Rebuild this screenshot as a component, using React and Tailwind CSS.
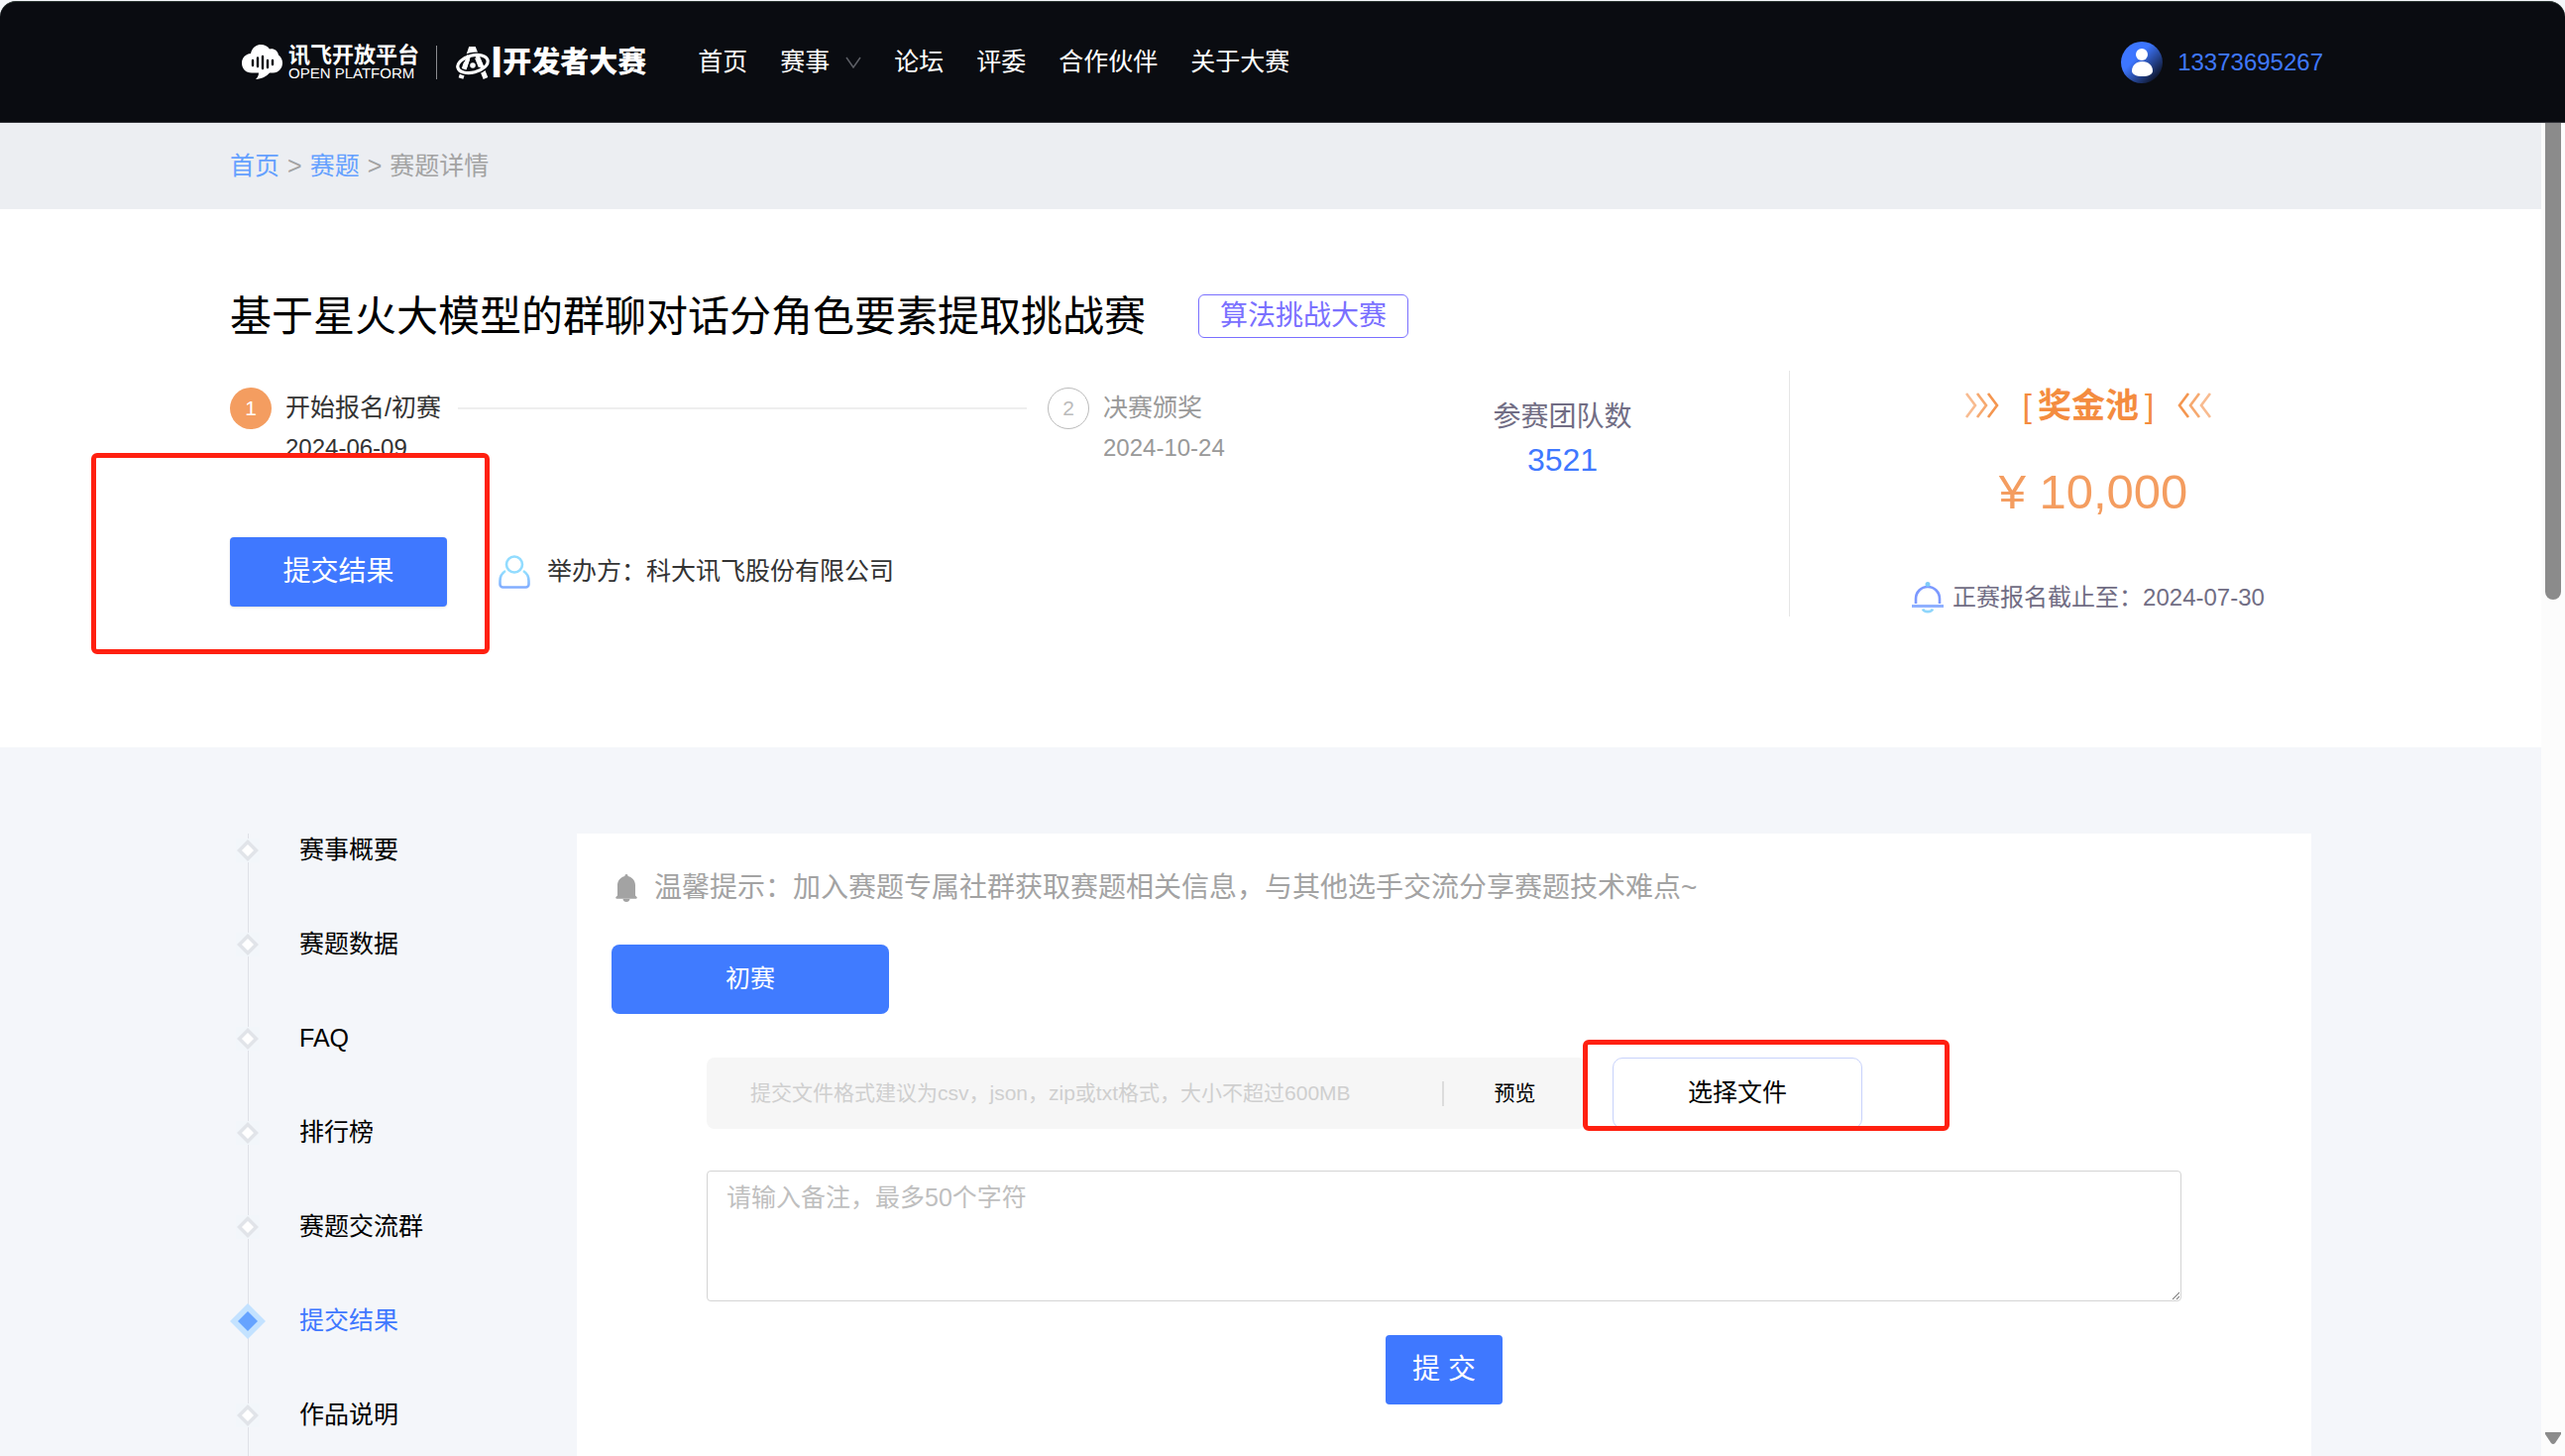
import { useRef, useState } from "react";

const navItems = [
  { label: "首页" },
  { label: "赛事", hasMenu: true },
  { label: "论坛" },
  { label: "评委" },
  { label: "合作伙伴" },
  { label: "关于大赛" },
];

const sections = ["赛事概要", "赛题数据", "FAQ", "排行榜", "赛题交流群", "提交结果", "作品说明"];

// Icons
const CloudLogo = () => (
  <svg className="w-[41px] h-[36px] shrink-0" viewBox="0 0 41 36" aria-hidden="true">
    <path
      fill="#fff"
      d="M9 9C10 4 14 0 19 0c4 0 7 1.500 9 4.500 4-1 8 1 9 6 2.500 2 4 4.500 4 8 0 5.500-4 10-9.500 10H28c-3 3.500-8 6-14 6.500 2-2 3-4 3-6.500h-7C4 28.500 0 24.500 0 18.500 0 13.500 3.500 9.500 9 9z"
    />
    <g stroke="#0a0c11" strokeWidth="2.400" strokeLinecap="round">
      <path d="M11 16v5M16 13.500v8.500M21 12v12M26 16v7M31 16v4" />
    </g>
  </svg>
);

const OrbitLogo = () => (
  <svg className="w-[36px] h-[34px] shrink-0" viewBox="0 0 36 34" aria-hidden="true">
    <g fill="none">
      <path stroke="#fff" strokeWidth="5" d="M6 33L16 3.500h3L31 33" />
      <ellipse cx="18" cy="18.500" rx="15.500" ry="8.500" stroke="#0a0c11" strokeWidth="6" transform="rotate(-14 18 18.500)" />
      <ellipse cx="18" cy="18.500" rx="15.500" ry="8.500" stroke="#fff" strokeWidth="3.200" transform="rotate(-14 18 18.500)" />
      <path stroke="#fff" strokeWidth="4" d="M10 22l4-12M22 9l6 14" />
    </g>
    <circle cx="18" cy="20" r="2.800" fill="#fff" />
  </svg>
);

const ChevronIcon = () => (
  <svg className="w-[16px] h-[12px]" viewBox="0 0 16 12" fill="none" stroke="#5d5f66" strokeWidth="1.500" aria-hidden="true">
    <path d="M1 1l7 10 7-10" />
  </svg>
);

const AvatarIcon = () => (
  <svg className="w-[42px] h-[42px]" viewBox="0 0 42 42" aria-hidden="true">
    <defs>
      <linearGradient id="avatar" x1="0.2" y1="0.2" x2="0.9" y2="0.9">
        <stop offset="0.25" stopColor="#3d76ff" />
        <stop offset="1" stopColor="#0b1020" />
      </linearGradient>
    </defs>
    <circle cx="21" cy="21" r="21" fill="url(#avatar)" />
    <circle cx="21" cy="13" r="6" fill="#fff" />
    <path fill="#fff" d="M11 29.500C11 24 15.500 20 21.500 20S32 24 32 29.500c0 3.500-4 5.500-10.500 5.500S11 33 11 29.500z" />
  </svg>
);

const OrganizerIcon = () => (
  <svg className="w-[32px] h-[34px]" viewBox="0 0 32 34" fill="none" strokeWidth="2.600" aria-hidden="true">
    <defs>
      <linearGradient id="person" x1="0" y1="0" x2="0" y2="1">
        <stop offset="0" stopColor="#92e0ff" />
        <stop offset="1" stopColor="#82adff" />
      </linearGradient>
    </defs>
    <circle cx="16" cy="9.500" r="8" stroke="#92dcff" />
    <path stroke="url(#person)" d="M7 16c-4 2.500-5.500 6-5.500 10v3.500a3 3 0 003 3h23a3 3 0 003-3V26c0-4-1.500-7.500-5.500-10" />
  </svg>
);

const DeadlineIcon = () => (
  <svg className="w-[32px] h-[32px]" viewBox="0 0 32 32" fill="none" strokeWidth="2.600" aria-hidden="true">
    <path stroke="#7c99ff" d="M4 22v-5a12 12 0 0124 0v5" />
    <path stroke="#8fb0ff" strokeWidth="3" d="M0 24.500h32" />
    <path stroke="#8fd6fb" d="M11 27.500c1.500 3.500 8.500 3.500 10 0" />
    <circle cx="16" cy="2.500" r="2.500" fill="#7fcbf8" />
  </svg>
);

const BellIcon = () => (
  <svg className="w-[22px] h-[28px]" viewBox="0 0 22 28" fill="#a3a3a3" aria-hidden="true">
    <path d="M11 0c1.100 0 1.600.8 1.600 2 4.400 1 7.400 4.600 7.400 9v10.500l1.500 1.500a1 1 0 01-.7 1.700H1.200A1 1 0 01.5 23L2 21.500V11c0-4.400 3-8 7.400-9 0-1.200.5-2 1.600-2z" />
    <path d="M7.500 25h7c-.3 1.800-1.600 3-3.500 3s-3.200-1.200-3.500-3z" />
  </svg>
);

const PrizeArrows = ({ flipped }) => (
  <svg
    className={`w-[34px] h-[26px] ${flipped ? "-scale-x-100" : ""}`}
    viewBox="0 0 34 26"
    fill="none"
    strokeWidth="2.600"
    aria-hidden="true"
  >
    <path stroke="#f8bb90" d="M1 1l9 12-9 12" />
    <path stroke="#f6a970" d="M12 1l9 12-9 12" />
    <path stroke="#f49650" d="M23 1l9 12-9 12" />
  </svg>
);

const DiamondIcon = ({ active }) =>
  active ? (
    <svg className="w-[36px] h-[36px]" viewBox="0 0 36 36" aria-hidden="true">
      <path fill="#c3e2ff" d="M18 0l18 18-18 18L0 18z" />
      <path fill="#66a3ff" d="M18 8l10 10-10 10L8 18z" />
    </svg>
  ) : (
    <svg className="w-[24px] h-[24px]" viewBox="0 0 24 24" aria-hidden="true">
      <path fill="#f2f6fa" d="M0 0h24v24H0z" />
      <path fill="#fff" stroke="#e1e4e9" strokeWidth="3.500" d="M12 3.500l8.500 8.500-8.500 8.500L3.500 12z" />
    </svg>
  );

function Header() {
  return (
    <header className="shrink-0 h-[123px] bg-[#0a0c11] border-t border-b border-t-[#2a3530] border-b-[#33343a] rounded-t-2xl">
      <div className="max-w-[2100px] h-full mx-auto flex items-center">
        <a href="#" className="flex items-center text-white">
          <CloudLogo />
          <span className="ml-1.5 flex flex-col">
            <span className="text-[22px] leading-[22px] font-bold">讯飞开放平台</span>
            <span className="text-[15px] leading-[14px]">OPEN PLATFORM</span>
          </span>
        </a>
        <span className="w-px h-[34px] ml-[17px] bg-[#8b8c90]" />
        <a href="#" className="ml-[18px] flex items-center text-white">
          <OrbitLogo />
          <span className="text-[44px] leading-[34px] font-bold">I</span>
          <span className="text-[29px] leading-[34px] font-black">开发者大赛</span>
        </a>
        <nav className="ml-[52px] flex items-center gap-[33px] text-[25px] text-white">
          {navItems.map((item) => (
            <a key={item.label} href="#" className="flex items-center gap-4">
              {item.label}
              {item.hasMenu && <ChevronIcon />}
            </a>
          ))}
        </nav>
        <a href="#" className="ml-auto flex items-center gap-[15px] text-2xl text-[#3f78ff]">
          <AvatarIcon />
          13373695267
        </a>
      </div>
    </header>
  );
}

function Hero() {
  return (
    <section className="shrink-0 bg-white h-[543px]">
      <div className="max-w-[2100px] mx-auto pt-[86px]">
        <div className="flex items-center h-[44px] gap-[53px]">
          <h1 className="text-[42px] text-black">基于星火大模型的群聊对话分角色要素提取挑战赛</h1>
          <span className="h-[44px] px-[21px] flex items-center border border-[#7a70ff] rounded-md text-[28px] text-[#7a70ff]">
            算法挑战大赛
          </span>
        </div>

        <div className="mt-[33px] flex h-[248px]">
          <div className="w-[1116px] pt-[17px]">
            <ol className="flex text-[25px]">
              <li className="flex-1 flex">
                <span className="w-[42px] h-[42px] rounded-full bg-[#f49d60] text-white text-[21px] flex items-center justify-center">
                  1
                </span>
                <span className="flex-1 ml-[14px] text-[#333]">
                  <span className="flex items-center h-[42px] gap-[17px]">
                    开始报名/初赛
                    <span className="flex-1 h-[2px] mr-[21px] bg-[#eee]" />
                  </span>
                  <span className="block text-2xl leading-[38px]">2024-06-09</span>
                </span>
              </li>
              <li className="w-[291px] flex">
                <span className="w-[42px] h-[42px] rounded-full border border-[#bbb] text-[#bbb] text-[21px] flex items-center justify-center">
                  2
                </span>
                <span className="ml-[14px] text-[#999]">
                  <span className="flex items-center h-[42px]">决赛颁奖</span>
                  <span className="block text-2xl leading-[38px]">2024-10-24</span>
                </span>
              </li>
            </ol>

            <div className="mt-[71px] flex items-center">
              <div className="relative">
                <button
                  type="button"
                  className="block w-[219px] h-[70px] rounded bg-[#3f78ff] text-white text-[28px] shadow-sm"
                >
                  提交结果
                </button>
                <span className="absolute -left-[140px] -top-[85px] w-[402px] h-[203px] border-[5px] border-[#ff2010] rounded-md pointer-events-none" />
              </div>
              <span className="ml-[52px]">
                <OrganizerIcon />
              </span>
              <span className="ml-[17px] text-[25px] text-[#333]">举办方：科大讯飞股份有限公司</span>
            </div>
          </div>

          <div className="flex-1 flex flex-col items-center pt-[26px]">
            <span className="text-[28px] leading-[42px] text-[#716d84]">参赛团队数</span>
            <span className="text-[32px] leading-[44px] text-[#3f78ff]">3521</span>
          </div>

          <div className="w-[527px] pl-[76px] border-l border-[#e6e6e6] flex flex-col items-center">
            <div className="mt-[14px] h-[42px] flex items-center gap-6 text-[#f48c3f]">
              <PrizeArrows />
              <span className="flex items-center gap-1.5 text-[34px] leading-[42px]">
                <span>[</span>
                <span className="font-bold">奖金池</span>
                <span>]</span>
              </span>
              <PrizeArrows flipped />
            </div>
            <div className="mt-[38px] ml-[10px] text-[49px] leading-[56px] text-[#f49d60]">¥ 10,000</div>
            <div className="mt-[60px] flex items-center gap-[9px] text-2xl leading-[38px] text-[#716d84]">
              <DeadlineIcon />
              <span>正赛报名截止至：2024-07-30</span>
            </div>
          </div>
        </div>
      </div>
    </section>
  );
}

function SectionNav({ current, onChange }) {
  return (
    <nav className="relative w-[350px] shrink-0 pt-[56px]">
      <span className="absolute left-[18px] top-[87px] bottom-0 w-px bg-[#dfe1e7]" />
      <ul className="relative">
        {sections.map((name) => (
          <li key={name}>
            <button type="button" onClick={() => onChange(name)} className="flex items-center h-[95px] text-[25px]">
              <span className="w-[36px] flex justify-center">
                <DiamondIcon active={name === current} />
              </span>
              <span className={name === current ? "ml-[34px] text-[#3f78ff]" : "ml-[34px] text-black"}>{name}</span>
            </button>
          </li>
        ))}
      </ul>
    </nav>
  );
}

function SubmitPanel() {
  const [fileName, setFileName] = useState("");
  const [remark, setRemark] = useState("");
  const fileInput = useRef(null);

  const handleSubmit = (e) => {
    e.preventDefault();
  };

  return (
    <div className="flex-1 mt-[87px] bg-white px-[35px] pt-[34px]">
      <div className="flex items-center h-[42px] pl-1 gap-[17px] text-[28px] text-[#a3a3a3]">
        <BellIcon />
        <span>温馨提示：加入赛题专属社群获取赛题相关信息，与其他选手交流分享赛题技术难点~</span>
      </div>
      <button type="button" className="block mt-[36px] w-[280px] h-[70px] rounded-lg bg-[#407bff] text-white text-[25px]">
        初赛
      </button>

      <form onSubmit={handleSubmit} className="mt-[44px] mx-24">
        <div className="flex">
          <div className="w-[887px] h-[72px] pl-[44px] flex items-center rounded-lg bg-[#f6f6f6] text-[21px]">
            <input
              type="text"
              readOnly
              value={fileName}
              aria-label="提交文件"
              placeholder="提交文件格式建议为csv，json，zip或txt格式，大小不超过600MB"
              className="flex-1 min-w-0 outline-none placeholder:text-[#cfcfcf]"
            />
            <span className="w-[2px] h-[25px] bg-[#dcdcdc]" />
            <button type="button" className="w-[143px] text-black">
              预览
            </button>
          </div>
          <div className="relative ml-[27px]">
            <button
              type="button"
              onClick={() => fileInput.current.click()}
              className="w-[252px] h-[72px] rounded-[10px] border border-[#c8d2fb] bg-white text-black text-[25px]"
            >
              选择文件
            </button>
            <input
              ref={fileInput}
              type="file"
              aria-label="选择文件"
              className="hidden"
              onChange={(e) => setFileName(e.target.files[0]?.name || "")}
            />
            <span className="absolute -left-[30px] -top-[18px] w-[370px] h-[92px] border-[5px] border-[#ff2010] rounded-md pointer-events-none" />
          </div>
        </div>

        <textarea
          value={remark}
          maxLength={50}
          onChange={(e) => setRemark(e.target.value)}
          aria-label="备注"
          placeholder="请输入备注，最多50个字符"
          className="block mt-[42px] w-full h-[132px] px-[19px] py-[8px] border border-[#d4d4d4] rounded text-[25px] leading-[36px] outline-none resize placeholder:text-[#bfbfbf]"
        />

        <button
          type="submit"
          className="block mx-auto mt-[34px] w-[118px] h-[70px] rounded-sm bg-[#3f78ff] text-white text-[28px]"
        >
          提 交
        </button>
      </form>
    </div>
  );
}

function App() {
  const [current, setCurrent] = useState("提交结果");

  return (
    <div className="h-screen bg-[#f4f6fa] pt-px flex flex-col overflow-hidden font-['Liberation_Sans','Noto_Sans_CJK_SC',sans-serif]">
      <Header />
      <div className="flex-1 min-h-0 flex">
        <main className="flex-1 min-w-0 flex flex-col overflow-hidden">
          <div className="shrink-0 bg-[#eceef2]">
            <nav className="max-w-[2100px] h-[87px] mx-auto flex items-center gap-2 text-[25px] text-[#a3a3a3]">
              <a href="#" className="text-[#64a0ff]">首页</a>
              <span>&gt;</span>
              <a href="#" className="text-[#64a0ff]">赛题</a>
              <span>&gt;</span>
              <span>赛题详情</span>
            </nav>
          </div>
          <Hero />
          <div className="flex-1 w-full max-w-[2100px] mx-auto flex">
            <SectionNav current={current} onChange={setCurrent} />
            <SubmitPanel />
          </div>
        </main>

        {/* Scrollbar track */}
        <div className="w-6 shrink-0 bg-[#fcfcfc] flex flex-col items-center justify-between pb-3">
          <span className="w-4 h-[481px] rounded-b-lg bg-[#8b8b8b]" />
          <svg className="w-4 h-3" viewBox="0 0 16 12" fill="#8b8b8b" aria-hidden="true">
            <path d="M0 0h16v2L10 11q-2 2-4 0L0 2z" />
          </svg>
        </div>
      </div>
    </div>
  );
}

export default App;
